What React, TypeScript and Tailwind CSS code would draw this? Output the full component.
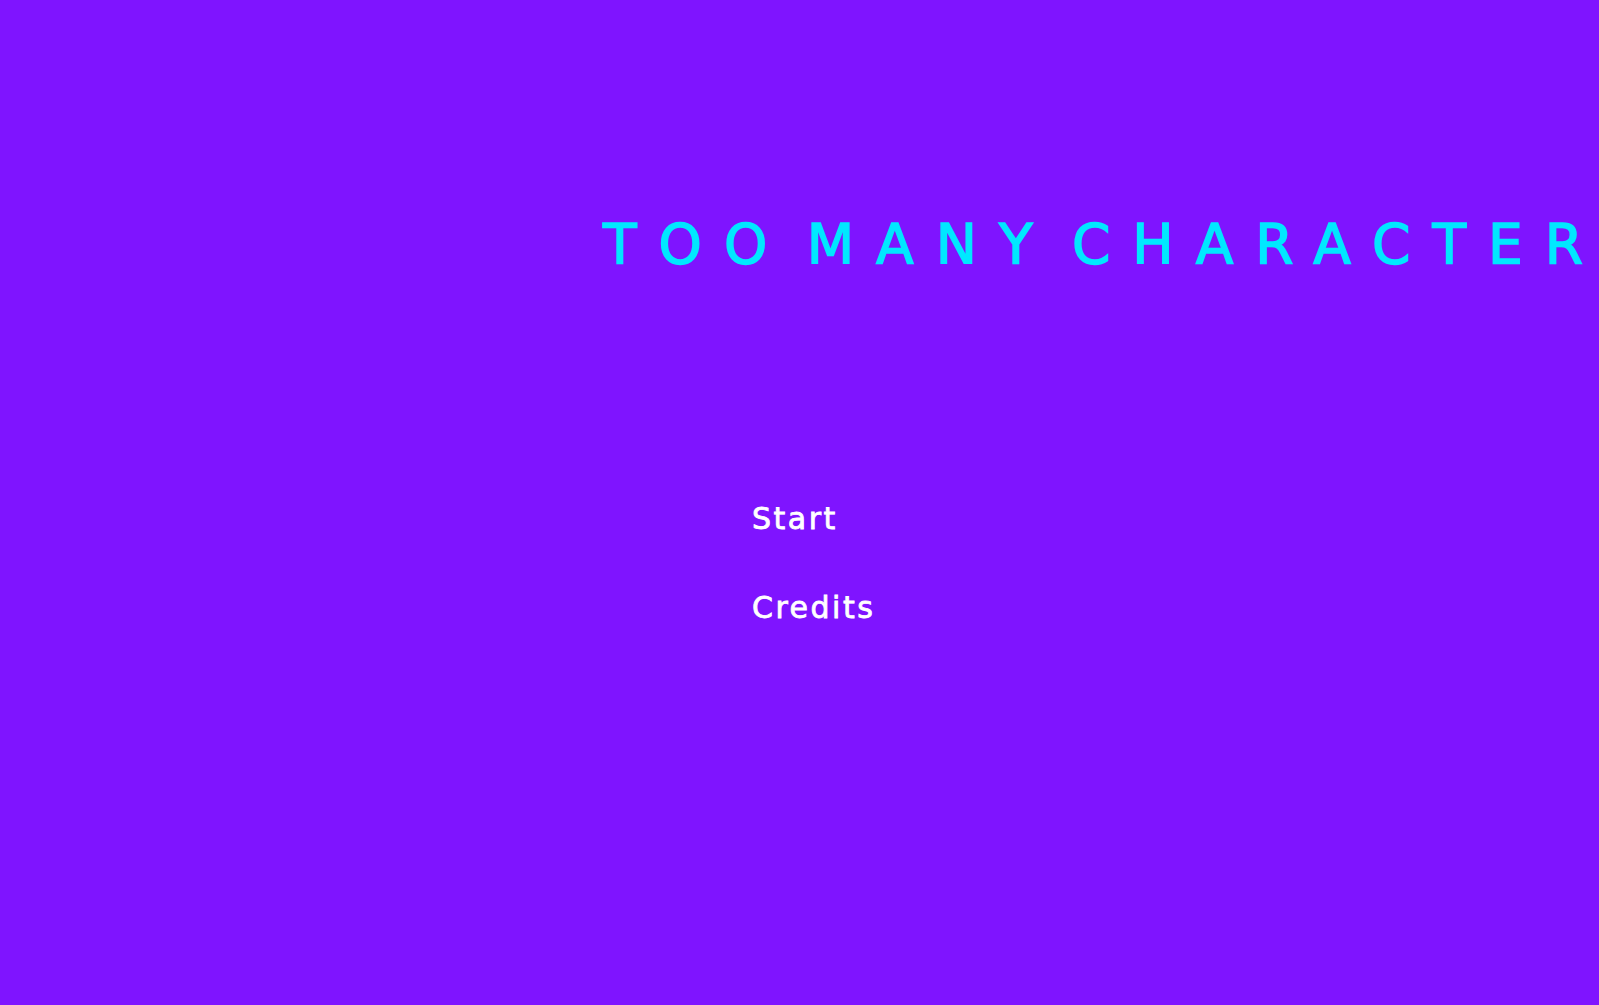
export default function App() {
  return (
    <div className="min-h-screen w-full overflow-hidden bg-[#7f14ff] font-['DejaVu_Sans','Noto_Sans',sans-serif]">
      {/* Title */}
      <div className="pt-[217px] pl-[603px] whitespace-nowrap text-[55px] leading-none tracking-[22px] [word-spacing:-22px] text-[#00e8ff] [-webkit-text-stroke:1.5px_#00e8ff]">
        TOO MANY CHARACTERS
      </div>

      {/* Menu */}
      <div className="mt-[232px] pl-[752px] flex flex-col items-start gap-[59px] text-[30px] leading-none tracking-[2.5px] text-white [-webkit-text-stroke:0.8px_#ffffff]">
        <button className="leading-none">Start</button>
        <button className="leading-none">Credits</button>
      </div>
    </div>
  );
}
